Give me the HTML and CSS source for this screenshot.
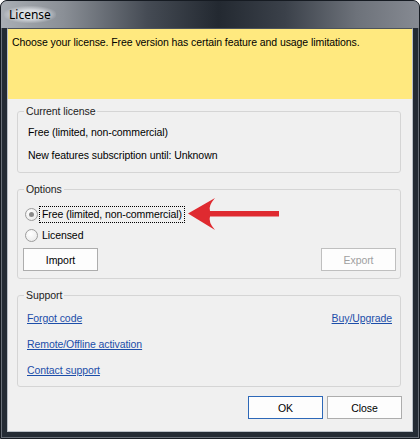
FILE: index.html
```html
<!DOCTYPE html>
<html>
<head>
<meta charset="utf-8">
<title>License</title>
<link rel="stylesheet" href="styles.css">
</head>
<body>
<div class="window">
	<div class="titlebar"><span class="title">License</span></div>
	<div class="client">
		<div class="notice">Choose your license. Free version has certain feature and usage limitations.</div>
		<div class="content">
			<fieldset class="group current">
				<legend>Current license</legend>
				<div class="line">Free (limited, non-commercial)</div>
				<div class="line">New features subscription until: Unknown</div>
			</fieldset>
			<fieldset class="group options">
				<legend>Options</legend>
				<label class="radio"><span class="dot checked"></span><span class="caption focused">Free (limited, non-commercial)</span></label>
				<label class="radio"><span class="dot"></span><span class="caption">Licensed</span></label>
				<div class="btnrow">
					<button class="btn">Import</button>
					<button class="btn" disabled>Export</button>
				</div>
			</fieldset>
			<fieldset class="group support">
				<legend>Support</legend>
				<div class="linkrow"><a href="#">Forgot code</a><a href="#">Buy/Upgrade</a></div>
				<div class="linkrow"><a href="#">Remote/Offline activation</a></div>
				<div class="linkrow"><a href="#">Contact support</a></div>
			</fieldset>
			<div class="footer">
				<button class="btn default">OK</button>
				<button class="btn">Close</button>
			</div>
		</div>
	</div>
	<!-- red annotation arrow pointing at the selected option -->
	<svg class="arrow" width="96" height="36" viewBox="0 0 96 36">
		<path d="M2 17.5 L29 2 Q22 10 24 15 L93 15 L93 20.5 L24 20.5 Q22 26 29 34 Z" fill="#df2a30"/>
	</svg>
</div>
</body>
</html>
```
FILE: styles.css
```css
*{ margin:0; padding:0; box-sizing:border-box;}
body{ background:#fff; font:10.5px/13px "Liberation Sans",Arial,sans-serif; letter-spacing:-0.08px; color:#000;}

.window{ width:420px; height:439px; position:relative; border:1px solid #161b22; border-radius:7px 7px 0 0; overflow:hidden;
	background:#242b34; box-shadow:inset 0 0 0 1px rgba(190,196,204,.45); display:flex; flex-direction:column;}
.titlebar{ height:27px; padding:0 0 0 8px; display:flex; align-items:center;
	background:linear-gradient(90deg,#a9aeb4 0%,#8a8f96 15%,#454b54 35%,#232931 52%,#3b414a 68%,#6d727a 85%,#868a92 100%);}
.title{ font:12px "Noto Sans",sans-serif; letter-spacing:0; color:#000; padding:0 5px; margin-left:-5px; border-radius:8px;
	background:radial-gradient(ellipse at center,rgba(225,228,232,.9) 35%,rgba(225,228,232,0) 75%);}

.client{ margin:0 6px 6px; height:404px; border:1px solid #b9bfc6; border-top-color:#4d535b; background:#f0f0f0; display:flex; flex-direction:column;}
.notice{ height:70px; background:#ffe97f; padding:7px 4px;}

.content{ padding:0 11px 0 9px; display:flex; flex-direction:column;}
.group{ border:1px solid #d5d5d5; border-radius:3px; padding:0 4px 0 5px; min-width:0;}
.group legend{ padding:0 2px; margin-left:1px; color:#222;}

.current{ margin-top:6px; padding-top:8px; padding-bottom:10px;}
.current .line{ padding-left:5px;}
.current .line + .line{ margin-top:10px;}

.options{ margin-top:10px; padding-top:10px; padding-bottom:7px;}
.radio{ display:flex; align-items:center; height:17px;}
.radio + .radio{ margin-top:4px;}
.dot{ width:13px; height:13px; margin-left:2px; border:1px solid #9c9c9c; border-radius:50%; background:radial-gradient(circle at 40% 35%,#fff 0%,#e6e6e6 100%); display:flex; align-items:center; justify-content:center;}
.dot.checked::after{ content:""; width:5px; height:5px; border-radius:50%; background:#8a8a8a;}
.caption{ margin-left:1px; padding:0 2px; line-height:15px; border:1px dotted transparent;}
.caption.focused{ border-color:#000;}

.btnrow{ display:flex; justify-content:space-between; margin-top:4px;}
.btn{ width:75px; height:23px; border:1px solid #adadad; background:#fdfdfd; font:10.5px "Liberation Sans",Arial,sans-serif; letter-spacing:-0.08px; color:#000;}
.btn:disabled{ color:#a0a0a0; border-color:#bfbfbf;}
.btn.default{ border-color:#2d68b8;}

.support{ margin-top:10px; padding-top:10px; padding-bottom:9px;}
.linkrow{ display:flex; justify-content:space-between; padding:0 4px;}
.linkrow + .linkrow{ margin-top:13px;}
.linkrow a{ color:#1c4ea9; text-decoration:underline;}

.footer{ display:flex; justify-content:flex-end; gap:4px; margin-top:9px; margin-right:-1px;}

.arrow{ position:absolute; left:185px; top:195px;}
```
